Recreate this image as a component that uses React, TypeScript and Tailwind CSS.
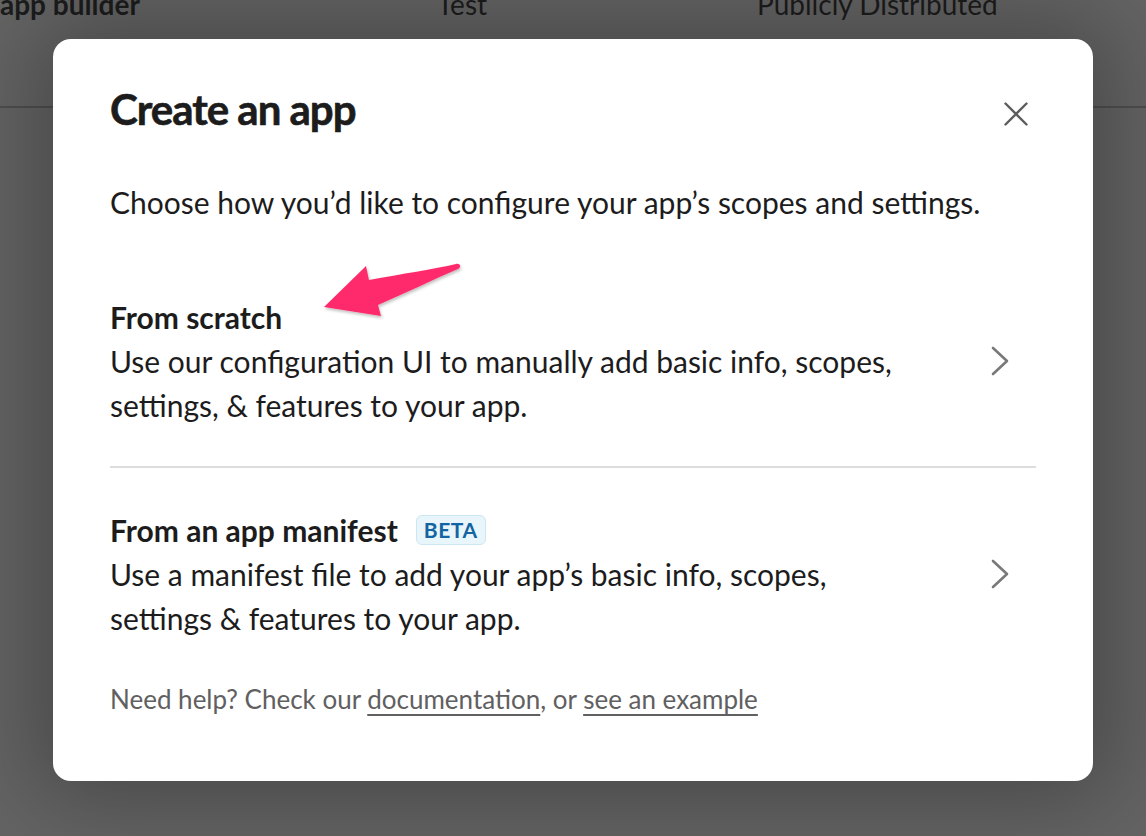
import React from 'react'

function Chevron() {
  return (
    <svg width="20" height="30" viewBox="0 0 20 30" fill="none" className="shrink-0">
      <path d="M3 2 L17 15 L3 28" stroke="#7a797a" strokeWidth="2.6" strokeLinecap="round" strokeLinejoin="round" />
    </svg>
  )
}

function Option({ title, badge, lines }: { title: string; badge?: string; lines: string[] }) {
  return (
    <button className="flex w-full items-center justify-between text-left">
      <div className="flex flex-col">
        <div className="flex items-center gap-[18px]">
          <span className="text-[30px] leading-[44px] font-bold text-[#1d1c1d]">{title}</span>
          {badge && (
            <span className="rounded-md border border-[#cce6f4] bg-[#e8f5fa] px-[7px] text-[21px] leading-[28px] font-bold tracking-wide text-[#1264a3]">
              {badge}
            </span>
          )}
        </div>
        {lines.map((l) => (
          <span key={l} className="text-[30px] leading-[44px] text-[#1d1c1d]">{l}</span>
        ))}
      </div>
      <div className="mr-[26px]">
        <Chevron />
      </div>
    </button>
  )
}

export default function App() {
  return (
    <div className="relative h-[836px] w-[1146px] overflow-hidden bg-[#646464] font-['Lato','Liberation_Sans',sans-serif]">
      {/* dimmed page behind */}
      <div className="flex h-[108px] items-start border-b-2 border-[#4f4f4f]">
        <div className="-mt-[17px] flex w-full text-[28px] text-[#1c1c1c]">
          <span className="w-[437px] font-bold">app builder</span>
          <span className="w-[320px]">Test</span>
          <span>Publicly Distributed</span>
        </div>
      </div>

      {/* modal overlay */}
      <div className="absolute inset-0 flex justify-center pt-[39px]">
        <div className="flex h-[742px] w-[1040px] flex-col rounded-[18px] bg-white px-[57px] pt-[43px] shadow-[0_0_90px_20px_rgba(0,0,0,0.28)]">
          <div className="flex items-center justify-between">
            <h1 className="text-[42px] leading-[48px] font-bold tracking-[-1px] text-[#1d1c1d] [-webkit-text-stroke:0.6px_#1d1c1d]">Create an app</h1>
            <button className="-mr-[2px] mt-[10px] flex h-[44px] w-[44px] items-center justify-center">
              <svg width="24" height="24" viewBox="0 0 24 24" fill="none">
                <path d="M1.5 1.5 L22.5 22.5 M22.5 1.5 L1.5 22.5" stroke="#5e5d5e" strokeWidth="2.4" strokeLinecap="round" />
              </svg>
            </button>
          </div>

          <p className="mt-[44px] text-[30px] leading-[44px] text-[#1d1c1d]">
            Choose how you’d like to configure your app’s scopes and settings.
          </p>

          <div className="relative mt-[71px]">
            <Option
              title="From scratch"
              lines={['Use our configuration UI to manually add basic info, scopes,', 'settings, & features to your app.']}
            />
            {/* annotation arrow */}
            <svg className="pointer-events-none absolute left-[212px] top-[-32px]" width="150" height="65" viewBox="0 0 150 65">
              <defs>
                <filter id="sh" x="-10%" y="-10%" width="130%" height="140%">
                  <feDropShadow dx="1" dy="2" stdDeviation="1.5" floodColor="#000" floodOpacity="0.25" />
                </filter>
              </defs>
              <path
                filter="url(#sh)"
                fill="#fe2c6c"
                d="M2 44 L44 3 L47 17 C80 11 112 6 134 1 C138 0 140 4 136 6 C110 17 84 30 56 42 L59 53 Z"
              />
            </svg>
          </div>

          <div className="mt-[39px] mb-[40px] h-[2px] bg-[#dddddd]" />

          <Option
            title="From an app manifest"
            badge="BETA"
            lines={['Use a manifest file to add your app’s basic info, scopes,', 'settings & features to your app.']}
          />

          <p className="mt-[41px] text-[26px] leading-[36px] text-[#616061]">
            Need help? Check our <a className="underline underline-offset-[5px]">documentation</a>, or{' '}
            <a className="underline underline-offset-[5px]">see an example</a>
          </p>
        </div>
      </div>
    </div>
  )
}
